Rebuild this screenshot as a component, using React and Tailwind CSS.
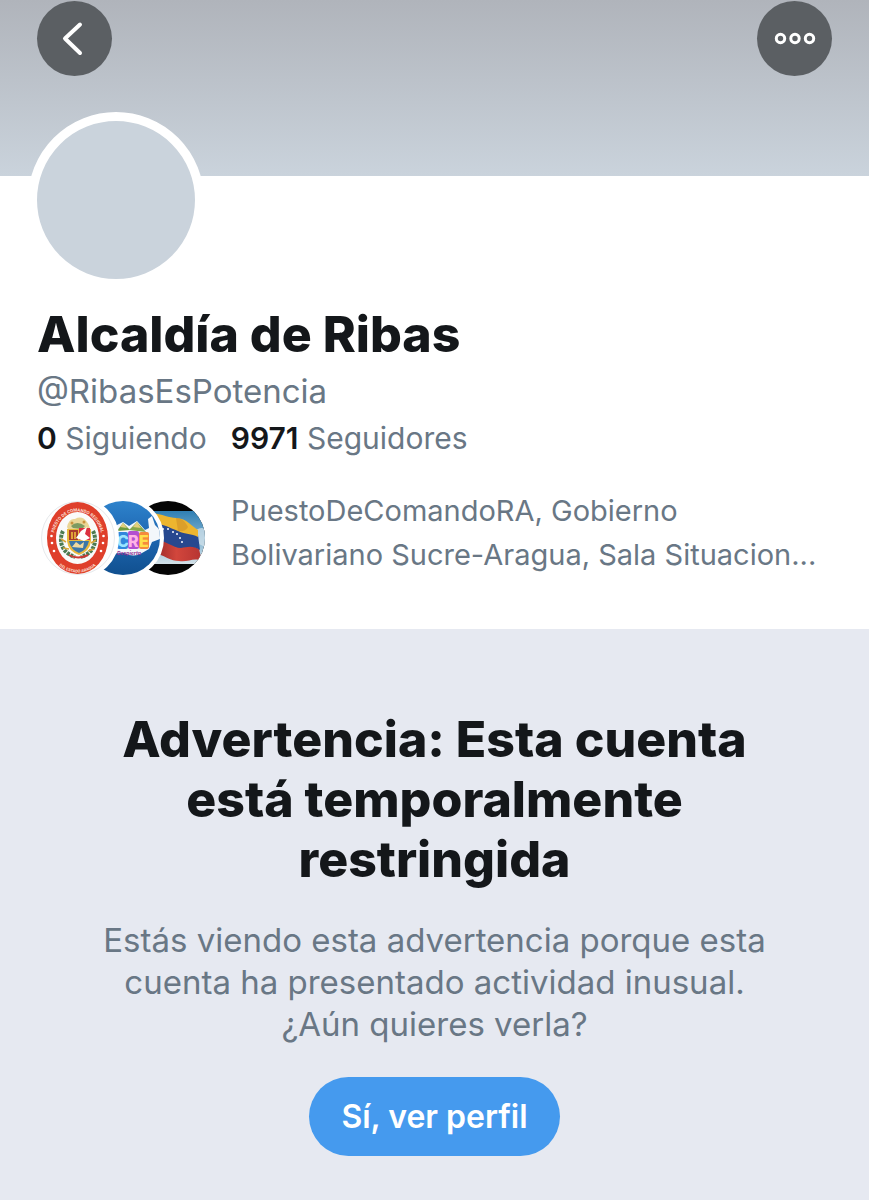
import React, { useState } from 'react';

const profile = {
  name: 'Alcaldía de Ribas',
  handle: '@RibasEsPotencia',
  following: 0,
  followers: 9971,
};

// Round seal of the regional command post
function SealAvatar() {
  return (
    <svg viewBox="0 0 74 74" className="block size-full" aria-hidden="true">
      <defs>
        <path id="seal-top" d="M 12 40 A 24.5 29.5 0 1 1 61 40" />
        <path id="seal-bottom" d="M 12 57 A 28 28 0 0 0 61 57" />
      </defs>
      <circle cx="37" cy="37" r="36.5" fill="#fdfdfd" stroke="#e6e9ec" />
      <ellipse cx="36.5" cy="37" rx="30.5" ry="36" fill="#df3f2b" />
      <ellipse cx="36.5" cy="37" rx="21.5" ry="26" fill="#fafafa" />
      <g fill="#fbe0d8" fontSize="4.4" fontWeight="700" fontFamily="Roboto, sans-serif">
        <text><textPath href="#seal-top" startOffset="50%" textAnchor="middle">PUESTO DE COMANDO REGIONAL</textPath></text>
        <text fontSize="4"><textPath href="#seal-bottom" startOffset="50%" textAnchor="middle">DEL ESTADO ARAGUA</textPath></text>
      </g>
      <g fill="#fff">
        <circle cx="10.5" cy="35" r="1.3" /><circle cx="11" cy="42" r="1.3" /><circle cx="13" cy="50" r="1.3" />
        <circle cx="62.5" cy="35" r="1.3" /><circle cx="62" cy="42" r="1.3" /><circle cx="60" cy="50" r="1.3" />
      </g>
      {/* laurel */}
      <path d="M22 30 C17 40 21 52 34 56 M52 30 C57 40 53 52 40 56" fill="none" stroke="#4c7a50" strokeWidth="4" strokeDasharray="3 1" />
      <path d="M20 38 L25 41 M22 47 L28 48 M50 42 L55 39 M47 50 L53 48" stroke="#d8a63a" strokeWidth="1.5" />
      {/* crest */}
      <path d="M26 26 Q28 17 34 18 Q41 14 46 21 Q50 26 48 30 H28 Z" fill="#ead596" />
      <path d="M30 25 Q36 19 44 25 L41 28 L32 27 Z" fill="#7d9a60" />
      <circle cx="31" cy="22" r="1.5" fill="#c9923d" /><circle cx="43" cy="21" r="1.5" fill="#c9923d" />
      <path d="M26 28 H50 V40 Q49 50 38 54 Q27 50 26 40 Z" fill="#e9b93c" />
      <path d="M28 29 H37 V39 H28 Z" fill="#a8382c" />
      <path d="M38 27 H49 V39 H38 Z" fill="#db3040" />
      <path d="M35 37 L40 30 L46 26 L44 33 L49 37 L43 40 Z" fill="#fff" />
      <path d="M28 40 H48 Q46 49 38 52 Q30 49 28 40 Z" fill="#3c77a8" />
      <path d="M31 46 L35 41 L39 44 L43 41 L42 47 Z" fill="#efd9a0" />
      <path d="M28 54 Q37 59 47 54" fill="none" stroke="#c93a35" strokeWidth="2" />
      <path d="M31 31 V38 M34 31 V38" stroke="#f0c33c" strokeWidth="1.5" />
    </svg>
  );
}

// Sucre town hall logo on blue
function SucreAvatar() {
  return (
    <svg viewBox="0 0 74 74" className="block size-full" aria-hidden="true">
      <defs>
        <linearGradient id="sucre-sky" x1="0" y1="0" x2="0" y2="1">
          <stop offset="0" stopColor="#2e83cc" />
          <stop offset="0.5" stopColor="#1d65b0" />
          <stop offset="1" stopColor="#10508f" />
        </linearGradient>
        <clipPath id="sucre-clip"><circle cx="37" cy="37" r="37" /></clipPath>
      </defs>
      <g clipPath="url(#sucre-clip)">
        <rect width="74" height="74" fill="url(#sucre-sky)" />
        <path d="M17 31 L37 21 L43 25 L51 20 L59 29 L63 27 L62 18 L66 15 L69 24 L74 29 V38 L66 41 L63 48 L56 52 Q48 57 38 52 L17 53 Z" fill="#f3f7fb" />
        <path d="M31 30 L37 22 L44 29 Z" fill="#6d9c3f" />
        <path d="M43 29 L51 21 L60 31 Z" fill="#88a84a" />
        <path d="M34 26 L37 22 L41 27 Z M47 26 L51 21 L55 27 Z" fill="#e3cf7c" />
        <rect x="31" y="31" width="11" height="17" rx="2" fill="#3187dc" />
        <rect x="42" y="30" width="11" height="18" rx="2" fill="#b24fd0" />
        <rect x="53" y="31" width="10" height="17" rx="2" fill="#f58a3d" />
        <g fontFamily="Inter, sans-serif" fontWeight="800" fontSize="16">
          <text x="31" y="46" fill="#9be5ff">C</text>
          <text x="42" y="46" fill="#ffb3e6">R</text>
          <text x="53" y="46" fill="#ffe04a">E</text>
        </g>
        <text x="31" y="54" fontFamily="Inter, sans-serif" fontStyle="italic" fontWeight="700" fontSize="5" fill="#8e2f91">Despierta</text>
      </g>
    </svg>
  );
}

// Venezuelan flag, letterboxed
function FlagAvatar() {
  return (
    <svg viewBox="0 0 74 74" className="block size-full" aria-hidden="true">
      <defs>
        <clipPath id="flag-clip"><circle cx="37" cy="37" r="37" /></clipPath>
        <linearGradient id="flag-sky" x1="0" y1="0" x2="0" y2="1">
          <stop offset="0" stopColor="#2f7fb4" />
          <stop offset="0.6" stopColor="#8fbcd6" />
          <stop offset="1" stopColor="#d3e1e8" />
        </linearGradient>
        <linearGradient id="flag-red" x1="0" y1="0" x2="1" y2="0">
          <stop offset="0" stopColor="#8f2426" />
          <stop offset="0.5" stopColor="#d2463c" />
          <stop offset="1" stopColor="#b53432" />
        </linearGradient>
      </defs>
      <g clipPath="url(#flag-clip)">
        <rect width="74" height="74" fill="#050505" />
        <rect y="10" width="74" height="53" fill="url(#flag-sky)" />
        <path d="M62 31 Q70 25 74 28 V46 L66 42 Z" fill="#d8e6ed" opacity="0.7" />
        <path d="M20 36 C34 37 44 45 51 44 C58 43 64 46 68 48 L71 61 C64 55 57 62 48 60 C40 60 34 55 20 50 Z" fill="url(#flag-red)" />
        <path d="M20 20 C34 21 40 26 47 29 C55 32 61 30 67 34 L69 49 C62 44 56 46 50 47 C42 47 34 39 20 37 Z" fill="#27488f" />
        <path d="M20 12 C32 13 38 17 45 17 C56 17 61 26 67 29 L67 36 C60 32 55 34 47 30 C39 27 34 23 20 22 Z" fill="#edb52f" />
        <path d="M45 17 C52 17 55 22 57 26 C54 31 50 30 47 30 Z" fill="#c98a25" opacity="0.5" />
        <g fill="#e8edf7">
          <circle cx="32" cy="28" r="1.1" /><circle cx="37" cy="28" r="1.1" /><circle cx="42" cy="31" r="1.1" />
          <circle cx="46" cy="33" r="1.1" /><circle cx="49" cy="37" r="1.1" /><circle cx="51" cy="41" r="1.1" />
        </g>
      </g>
    </svg>
  );
}

export default function App() {
  const [revealed, setRevealed] = useState(false);

  return (
    <div className="min-h-screen flex flex-col bg-white font-['Inter',sans-serif] text-[#14171a] antialiased">
      <header className="h-44 shrink-0 flex items-start justify-between px-[37px] pt-px bg-linear-to-b from-[#b0b4bb] to-[#cad3dc]">
        <button type="button" aria-label="Volver" className="size-[75px] rounded-full bg-[#5b5f63] flex items-center justify-center">
          <svg viewBox="0 0 75 75" className="size-full" fill="none" stroke="#fff" strokeWidth="4" strokeLinecap="round" strokeLinejoin="round">
            <path d="M43 23.5 L28 37.5 L43 52" />
          </svg>
        </button>
        <button type="button" aria-label="Más opciones" className="size-[75px] rounded-full bg-[#5b5f63] flex items-center justify-center">
          <svg viewBox="0 0 75 75" className="size-full" fill="none" stroke="#fff" strokeWidth="3">
            <circle cx="23.5" cy="37.5" r="4.2" />
            <circle cx="38" cy="37.5" r="4.2" />
            <circle cx="52.5" cy="37.5" r="4.2" />
          </svg>
        </button>
      </header>

      <section className="px-[37px] pb-[50px]">
        {/* the default avatar overlaps the banner */}
        <div className="relative -mt-16 -ml-[9px] size-44 rounded-full border-[9px] border-white bg-[#cad3dc]" />

        <h1 className="mt-4 text-[50px] leading-[60px] font-extrabold">{profile.name}</h1>
        <p className="mt-[3px] text-[33px] leading-[48px] text-[#697785]">{profile.handle}</p>
        <div className="mt-[3px] flex gap-6 text-[30px] leading-[40px] text-[#697785]">
          <a href="#siguiendo"><span className="font-semibold text-[#14171a]">{profile.following}</span> Siguiendo</a>
          <a href="#seguidores"><span className="font-semibold text-[#14171a]">{profile.followers}</span> Seguidores</a>
        </div>

        <div className="mt-[31px] flex items-start gap-[22px]">
          <div className="flex shrink-0 mt-2">
            <div className="relative z-20 size-[82px] rounded-full border-4 border-white bg-white"><SealAvatar /></div>
            <div className="relative z-10 size-[82px] -ml-[37px] rounded-full border-4 border-white bg-white"><SucreAvatar /></div>
            <div className="size-[82px] -ml-[37px] rounded-full border-4 border-white bg-white"><FlagAvatar /></div>
          </div>
          <p className="text-[29px] leading-[44px] text-[#697785]">
            PuestoDeComandoRA, Gobierno<br />
            Bolivariano Sucre-Aragua, Sala Situacion...
          </p>
        </div>
      </section>

      {!revealed && (
        <main className="grow flex flex-col items-center px-20 pt-20 pb-11 bg-[#e6e9f1] text-center">
          <h2 className="max-w-[680px] text-[50px] leading-[60px] font-extrabold">Advertencia: Esta cuenta está temporalmente restringida</h2>
          <p className="mt-[30px] max-w-[700px] text-[33px] leading-[42px] text-[#697785]">
            Estás viendo esta advertencia porque esta cuenta ha presentado actividad inusual. ¿Aún quieres verla?
          </p>
          <button type="button" onClick={() => setRevealed(true)} className="mt-8 h-[79px] px-8 rounded-full bg-[#459aee] text-[32px] leading-[40px] font-semibold text-white">
            Sí, ver perfil
          </button>
        </main>
      )}
    </div>
  );
}
